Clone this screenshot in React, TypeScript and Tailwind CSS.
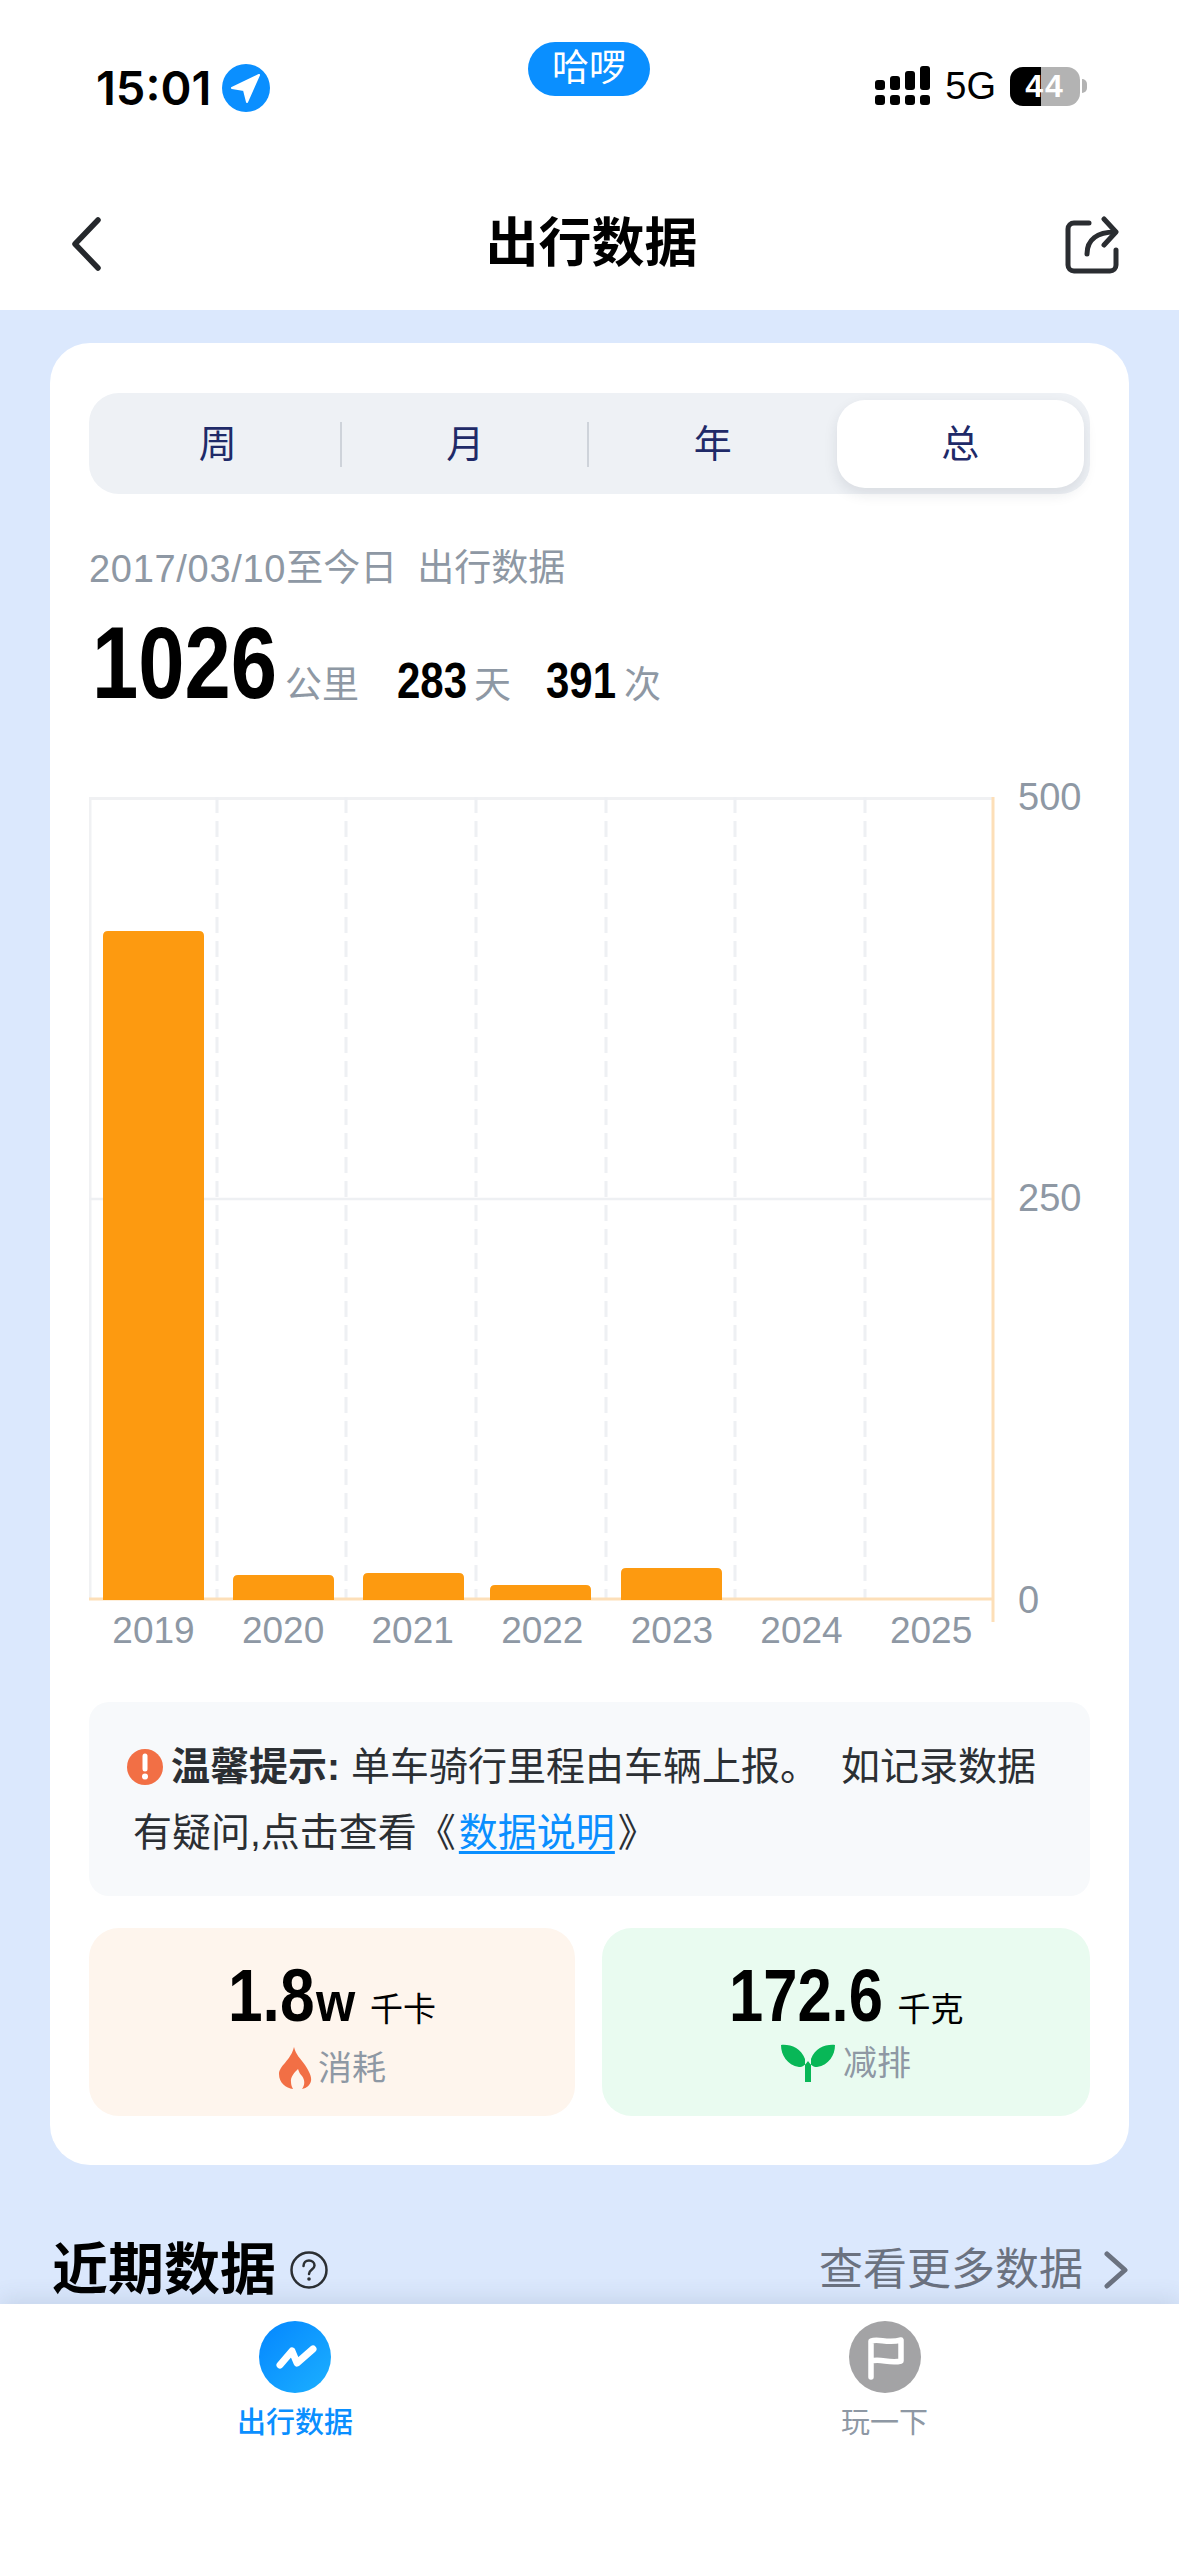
import React from 'react';

const YEARS = ['2019', '2020', '2021', '2022', '2023', '2024', '2025'];
const BARS = [
  { x: 14, y: 134, h: 669 },
  { x: 144, y: 778, h: 25 },
  { x: 274, y: 776, h: 27 },
  { x: 401, y: 788, h: 15 },
  { x: 532, y: 771, h: 32 },
];

const Chart = () => (
  <svg width="1003" height="890" viewBox="0 -20 1003 890" className="block">
    <rect x="0" y="0" width="904" height="802" fill="#fff" />
    <line x1="1" y1="0" x2="1" y2="802" stroke="#f0f1f3" strokeWidth="3" />
    <line x1="0" y1="1.5" x2="904" y2="1.5" stroke="#f0f1f3" strokeWidth="3" />
    <line x1="0" y1="402" x2="904" y2="402" stroke="#eef0f3" strokeWidth="2.5" />
    {[128, 257, 387, 517, 646, 776].map((x) => (
      <line key={x} x1={x} y1="0" x2={x} y2="802" stroke="#eef0f3" strokeWidth="3" strokeDasharray="16 8" />
    ))}
    <line x1="0" y1="802" x2="904" y2="802" stroke="#fddfb8" strokeWidth="3" />
    <line x1="904" y1="0" x2="904" y2="825" stroke="#fddfb8" strokeWidth="3" />
    {BARS.map((b) => (
      <path
        key={b.x}
        d={`M${b.x} ${b.y + b.h}V${b.y + 5}q0-5 5-5h91q5 0 5 5V${b.y + b.h}z`}
        fill="#fd9a10"
      />
    ))}
    {YEARS.map((y, i) => (
      <text key={y} x={64.5 + i * 129.6} y="846" textAnchor="middle" fontSize="37" fill="#8e98a4">
        {y}
      </text>
    ))}
    <text x="929" y="13" fontSize="38" fill="#8e98a4">500</text>
    <text x="929" y="414" fontSize="38" fill="#8e98a4">250</text>
    <text x="929" y="816" fontSize="38" fill="#8e98a4">0</text>
  </svg>
);

const StatusBar = () => (
  <div className="relative flex h-[190px] items-start justify-between pl-[96px] pr-[92px] pt-[62px]">
    <div className="flex items-center gap-[10px]">
      <span className='font-["Inter"] text-[47px] leading-[52px] font-semibold text-black'>15:01</span>
      <svg width="50" height="50" viewBox="0 0 50 50">
        <circle cx="25" cy="25" r="24" fill="#0a8fff" />
        <path d="M38 12 L11 25 L23 27 L26 39 Z" fill="#fff" stroke="#fff" strokeWidth="2" strokeLinejoin="round" />
      </svg>
    </div>
    <div className="absolute left-[528px] top-[42px] flex h-[54px] w-[122px] items-center justify-center rounded-[27px] bg-[#0a8fff] text-[37px] text-white">
      哈啰
    </div>
    <div className="flex items-center gap-[14px] pt-[4px]">
      <svg width="56" height="40" viewBox="0 0 56 40">
        <rect x="0" y="14" width="10" height="10" rx="3" fill="#000" />
        <rect x="15" y="10" width="10" height="14" rx="3" fill="#000" />
        <rect x="30" y="5" width="10" height="19" rx="3" fill="#000" />
        <rect x="45" y="0" width="10" height="24" rx="3" fill="#000" />
        <rect x="0" y="29" width="10" height="10" rx="3" fill="#000" />
        <rect x="15" y="29" width="10" height="10" rx="3" fill="#000" />
        <rect x="30" y="29" width="10" height="10" rx="3" fill="#000" />
        <rect x="45" y="29" width="10" height="10" rx="3" fill="#000" />
      </svg>
      <span className="text-[38px] leading-[40px] text-black">5G</span>
      <div className="flex items-center">
        <div className="relative flex h-[39px] w-[70px] items-center justify-center overflow-hidden rounded-[13px] bg-[#b3b3b3]">
          <div className="absolute inset-y-0 left-0 w-[31px] bg-black" />
          <span className="relative text-[32px] font-bold leading-none tracking-[2px] text-white">44</span>
        </div>
        <div className="ml-[2px] h-[14px] w-[5px] rounded-r-full bg-[#b3b3b3]" />
      </div>
    </div>
  </div>
);

const Header = () => (
  <div className="flex h-[120px] items-start justify-between pl-[64px] pr-[60px] pt-[24px]">
    <div className="w-[54px]">
      <svg width="42" height="60" viewBox="0 0 42 60" fill="none">
        <path d="M34 6 L11 30 L34 54" stroke="#25282c" strokeWidth="5.5" strokeLinecap="round" strokeLinejoin="round" />
      </svg>
    </div>
    <div className="text-[53px] font-bold leading-[60px] text-black">出行数据</div>
    <svg width="54" height="60" viewBox="0 0 54 60" fill="none" stroke="#2a2d31" strokeWidth="5" strokeLinecap="round" strokeLinejoin="round">
      <path d="M24 9H9a6 6 0 0 0-6 6v36a6 6 0 0 0 6 6h36a6 6 0 0 0 6-6V36" />
      <path d="M22 40c0-14 10-22 28-22" />
      <path d="M39 5 L51 18 L39 31" />
    </svg>
  </div>
);

const Tabs = () => (
  <div className="flex h-[101px] items-center rounded-[30px] bg-[#eef1f5] pl-[5px] pr-[6px]">
    {['周', '月', '年'].map((t, i) => (
      <div key={t} className="relative flex h-[88px] w-[248px] items-center justify-center pt-[2px] text-[38px] text-[#1f2a68]">
        {t}
        {i < 2 && <div className="absolute right-[0px] top-[22px] h-[45px] w-[2px] bg-[#ced3da]" />}
      </div>
    ))}
    <div className="flex h-[88px] w-[248px] items-center justify-center rounded-[28px] bg-white pt-[2px] text-[38px] text-[#1f2a68] shadow-[0_6px_14px_rgba(30,40,60,0.1)]">
      总
    </div>
  </div>
);

export default function App() {
  return (
    <div className='flex h-[2556px] w-[1179px] flex-col overflow-hidden bg-[#dbe8fd] font-["Liberation_Sans","Noto_Sans_CJK_SC",sans-serif]'>
      <div className="bg-white">
        <StatusBar />
        <Header />
      </div>

      <div className="flex-1 overflow-hidden px-[50px] pt-[33px]">
        <div className="rounded-[40px] bg-white px-[39px] pb-[49px] pt-[50px]">
          <Tabs />

          <div className="mt-[50px] flex text-[37px] leading-[50px] text-[#8e98a4]">
            <span className="text-[38px] tracking-[0.7px]">2017/03/10</span>
            <span>至今日</span>
            <span className="ml-[20px]">出行数据</span>
          </div>

          <div className="mt-[19px] flex items-baseline pl-[3px] text-[37px] text-[#8e98a4]">
            <span className="inline-block w-[182px] origin-left scale-x-[0.815] whitespace-nowrap text-[102px] font-bold leading-[100px] text-black">1026</span>
            <span className="ml-[11px]">公里</span>
            <span className="ml-[38px] inline-block w-[70px] origin-left scale-x-[0.84] text-[50px] font-bold text-black">283</span>
            <span className="ml-[7px]">天</span>
            <span className="ml-[35px] inline-block w-[67px] origin-left scale-x-[0.84] text-[50px] font-bold text-black">391</span>
            <span className="ml-[11px]">次</span>
          </div>

          <div className="mt-[58px]">
            <Chart />
          </div>

          <div className="mt-[35px] rounded-[20px] bg-[#f7f9fb] pb-[30px] pl-[44px] pr-[30px] pt-[32px] text-[39px] leading-[66px] text-[#2b2f33]">
            <div className="flex items-center">
              <svg width="36" height="36" viewBox="0 0 36 36" className="-ml-[6px] mr-[8px] shrink-0">
                <circle cx="18" cy="18" r="18" fill="#f26f45" />
                <path d="M18 7v13" stroke="#fff" strokeWidth="5" strokeLinecap="round" />
                <circle cx="18" cy="27.5" r="3" fill="#fff" />
              </svg>
              <span className="font-bold">温馨提示:</span>
              <span className="ml-[11px] whitespace-nowrap">单车骑行里程由车辆上报。</span>
              <span className="ml-[22px] whitespace-nowrap">如记录数据</span>
            </div>
            <div className="whitespace-nowrap">
              有疑问,点击查看《<span className="mx-[3px] text-[#0a8fff] underline decoration-[3px] underline-offset-[5px]">数据说明</span>》
            </div>
          </div>

          <div className="mt-[32px] flex justify-between">
            <div className="flex h-[188px] w-[486px] flex-col items-center rounded-[30px] bg-[#fef5ed] pt-[23px]">
              <div className="flex items-baseline text-black">
                <span className="inline-block w-[88px] origin-left scale-x-[0.83] text-[75px] font-bold leading-[88px]">1.8</span>
                <span className="inline-block w-[40px] origin-left scale-x-[0.9] text-[56px] font-bold">w</span>
                <span className="ml-[14px] text-[33px]">千卡</span>
              </div>
              <div className="mt-[2px] flex items-center gap-[6px] text-[34px] leading-[44px] text-[#8e98a4]">
                <svg width="34" height="42" viewBox="0 0 34 42">
                  <path d="M16 0c2 8 6 11 11 18 4 6 7 12 6 16-1 4-4 7-9 8 3-4 3-9 0-13-2-2-3-4-4-7-3 3-8 8-7 13 0 3 1 5 2 7-7-1-14-6-14-15C1 19 13 13 16 0z" fill="#f26f45" />
                </svg>
                消耗
              </div>
            </div>
            <div className="flex h-[188px] w-[488px] flex-col items-center rounded-[30px] bg-[#e9fbf0] pt-[23px]">
              <div className="flex items-baseline text-black">
                <span className="inline-block w-[155px] origin-left scale-x-[0.82] text-[75px] font-bold leading-[88px]">172.6</span>
                <span className="ml-[14px] text-[33px]">千克</span>
              </div>
              <div className="mt-[2px] flex items-center gap-[8px] text-[34px] leading-[44px] text-[#8e98a4]">
                <svg width="54" height="38" viewBox="0 0 54 38">
                  <path d="M0 1c9-1 20 3 24 14v23h6V15C34 4 45 0 54 1c0 10-6 20-18 22-4 0-6-2-9-6-3 4-5 6-9 6C6 21 0 11 0 1z" fill="#08b757" />
                </svg>
                减排
              </div>
            </div>
          </div>
        </div>

        <div className="-mx-[50px] flex items-center justify-between pl-[52px] pr-[50px] pt-[73px]">
          <div className="flex items-center">
            <span className="text-[56px] font-bold leading-[64px] text-black">近期数据</span>
            <svg width="38" height="38" viewBox="0 0 38 38" fill="none" className="ml-[14px]">
              <circle cx="19" cy="19" r="17.5" stroke="#2b2f33" strokeWidth="2.5" />
              <path d="M13.5 15c0-3.5 2.5-5.5 5.5-5.5s5.500 2 5.500 5c0 4-5.500 4-5.500 8.500" stroke="#2b2f33" strokeWidth="2.500" strokeLinecap="round" />
              <circle cx="19" cy="28" r="1.800" fill="#2b2f33" />
            </svg>
          </div>
          <div className="flex items-center gap-[20px] text-[44px] leading-[56px] text-[#6b7280]">
            查看更多数据
            <svg width="26" height="38" viewBox="0 0 26 38" fill="none">
              <path d="M4 3 L22 19 L4 35" stroke="#6b7280" strokeWidth="5" strokeLinecap="round" strokeLinejoin="round" />
            </svg>
          </div>
        </div>
      </div>

      <div className="relative flex h-[252px] bg-white pt-[17px] shadow-[0_-6px_20px_rgba(60,80,110,0.12)]">
        <div className="flex w-[590px] flex-col items-center">
          <svg width="72" height="72" viewBox="0 0 72 72">
            <defs>
              <linearGradient id="tabActive" x1="0" y1="0" x2="1" y2="1">
                <stop offset="0" stopColor="#0486ff" />
                <stop offset="1" stopColor="#1cb0ff" />
              </linearGradient>
            </defs>
            <circle cx="36" cy="36" r="36" fill="url(#tabActive)" />
            <path d="M21 44 L33 30 L38 42 L54 28" fill="none" stroke="#fff" strokeWidth="7" strokeLinecap="round" strokeLinejoin="round" />
          </svg>
          <span className="mt-[12px] text-[29px] font-medium leading-[36px] text-[#0a8fff]">出行数据</span>
        </div>
        <div className="flex w-[589px] flex-col items-center">
          <svg width="72" height="72" viewBox="0 0 72 72">
            <circle cx="36" cy="36" r="36" fill="#a3a3a5" />
            <path d="M22 56V20c8-3 16 3 30-1v21c-12 3-20-3-30 0" fill="none" stroke="#fff" strokeWidth="5.500" strokeLinecap="round" strokeLinejoin="round" />
          </svg>
          <span className="mt-[12px] text-[29px] leading-[36px] text-[#8e98a4]">玩一下</span>
        </div>
      </div>
    </div>
  );
}
